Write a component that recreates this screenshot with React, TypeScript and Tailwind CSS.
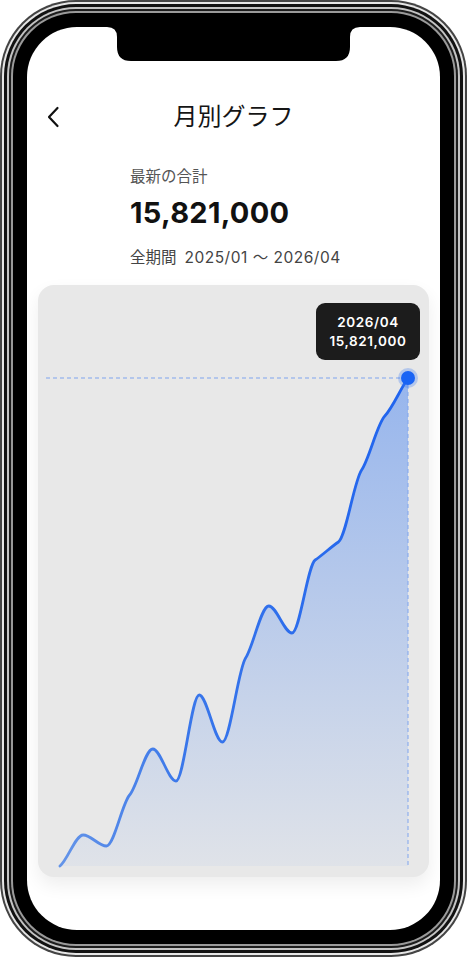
import React from "react";

const YS = [581, 550, 561, 510, 464, 496, 410, 457, 373, 321, 348, 275, 257, 185, 131, 93];
const X0 = 22;
const X1 = 370;

function buildPath() {
  const n = YS.length;
  const dx = (X1 - X0) / (n - 1);
  const xs = YS.map((_, i) => X0 + dx * i);
  const sec: number[] = [];
  for (let i = 0; i < n - 1; i++) sec.push((YS[i + 1] - YS[i]) / dx);
  const m: number[] = [];
  for (let i = 0; i < n; i++) {
    if (i === 0) {
      m.push(sec[0] * 0.6);
    } else if (i === n - 1) {
      m.push(sec[n - 2] * 0.9);
    } else {
      const a = sec[i - 1];
      const b = sec[i];
      if (a * b <= 0) m.push(0);
      else {
        const h = (2 * a * b) / (a + b);
        m.push(h * 0.55);
      }
    }
  }
  let d = `M${xs[0].toFixed(2)} ${YS[0]}`;
  for (let i = 0; i < n - 1; i++) {
    const c1x = xs[i] + dx / 3;
    const c1y = YS[i] + (m[i] * dx) / 3;
    const c2x = xs[i + 1] - dx / 3;
    const c2y = YS[i + 1] - (m[i + 1] * dx) / 3;
    d += ` C${c1x.toFixed(2)} ${c1y.toFixed(2)} ${c2x.toFixed(2)} ${c2y.toFixed(2)} ${xs[i + 1].toFixed(2)} ${YS[i + 1]}`;
  }
  return d;
}

function Chart() {
  const line = buildPath();
  const area = `${line} L${X1} 581 L${X0} 581 Z`;
  return (
    <svg width="391" height="592" viewBox="0 0 391 592" className="block">
      <defs>
        <linearGradient id="fillg" x1="0" y1="93" x2="0" y2="581" gradientUnits="userSpaceOnUse">
          <stop offset="0" stopColor="#3b7cf2" stopOpacity="0.47" />
          <stop offset="1" stopColor="#3b7cf2" stopOpacity="0.05" />
        </linearGradient>
        <linearGradient id="lineg" x1="22" y1="0" x2="370" y2="0" gradientUnits="userSpaceOnUse">
          <stop offset="0" stopColor="#6494e8" />
          <stop offset="0.35" stopColor="#3a77ea" />
          <stop offset="1" stopColor="#1f63ee" />
        </linearGradient>
      </defs>
      <path d={area} fill="url(#fillg)" />
      <line x1="8" y1="93" x2="370" y2="93" stroke="#7fa4ee" strokeWidth="1" strokeDasharray="4 3" />
      <line x1="370" y1="93" x2="370" y2="581" stroke="#7fa4ee" strokeWidth="1" strokeDasharray="4 3" />
      <path d={line} fill="none" stroke="url(#lineg)" strokeWidth="2.8" strokeLinecap="round" strokeLinejoin="round" />
      <circle cx="370" cy="93" r="10" fill="#3b7cf2" fillOpacity="0.3" />
      <circle cx="370" cy="93" r="7" fill="#1a64f4" />
    </svg>
  );
}

export default function App() {
  return (
    <div
      className="w-[467px] h-[957px] bg-white overflow-hidden"
      style={{ fontFamily: 'Inter, "Noto Sans CJK JP", "Noto Sans", sans-serif' }}
    >
      <div className="w-full h-full rounded-[76px] bg-[#444] p-[2px]">
        <div className="w-full h-full rounded-[74px] bg-[#e6e6e6] p-[2px]">
          <div className="w-full h-full rounded-[72px] bg-[#111] p-[3px]">
            <div className="w-full h-full rounded-[69px] bg-[#c4c4c4] p-[2px]">
              <div className="w-full h-full rounded-[67px] bg-[#1c1c1c] p-[2px]">
                <div className="w-full h-full rounded-[65px] bg-[#9a9a9a] p-[2px]">
                  <div className="w-full h-full rounded-[63px] bg-black p-[14px]">
                    <div className="relative w-full h-full rounded-[50px] bg-white overflow-hidden flex flex-col">
                      <svg
                        width="253"
                        height="34"
                        viewBox="0 0 253 34"
                        className="absolute top-0 left-[80px]"
                      >
                        <path
                          d="M0 0 Q10 0 10 10 V20 Q10 34 24 34 H229 Q243 34 243 20 V10 Q243 0 253 0 Z"
                          fill="#000"
                        />
                      </svg>

                      <div className="relative mt-[68px] h-[44px] flex items-center justify-center">
                        <svg
                          width="16"
                          height="24"
                          viewBox="0 0 16 24"
                          className="absolute left-[18px] top-[10px]"
                        >
                          <path d="M12.5 3 L4 12 L12.5 21" fill="none" stroke="#111" strokeWidth="2.2" strokeLinecap="round" strokeLinejoin="round" />
                        </svg>
                        <span className="text-[24px] text-[#151515] leading-none">月別グラフ</span>
                      </div>

                      <div className="pl-[103px]">
                        <div className="mt-[28px] h-[20px] text-[15.5px] leading-[20px] text-[#555]">最新の合計</div>
                        <div className="mt-[9px] h-[34px] text-[29px] leading-[34px] font-bold text-[#111] tracking-[0.3px]">
                          15,821,000
                        </div>
                        <div className="mt-[18px] h-[20px] text-[15.5px] leading-[20px] text-[#444] flex">
                          <span>全期間</span>
                          <span className="ml-[8px] tracking-[0.5px]">2025/01 〜 2026/04</span>
                        </div>
                      </div>

                      <div className="relative mt-[17px] mx-[11px] h-[592px] rounded-[16px] bg-[#e8e8e8] shadow-[0_8px_18px_rgba(0,0,0,0.07)]">
                        <Chart />
                        <div className="absolute left-[278px] top-[18px] w-[104px] h-[57px] rounded-[9px] bg-[#1c1c1c] flex flex-col items-center justify-center text-white text-[13.5px] font-semibold leading-[19px] tracking-[0.6px]">
                          <span>2026/04</span>
                          <span>15,821,000</span>
                        </div>
                      </div>
                    </div>
                  </div>
                </div>
              </div>
            </div>
          </div>
        </div>
      </div>
    </div>
  );
}
